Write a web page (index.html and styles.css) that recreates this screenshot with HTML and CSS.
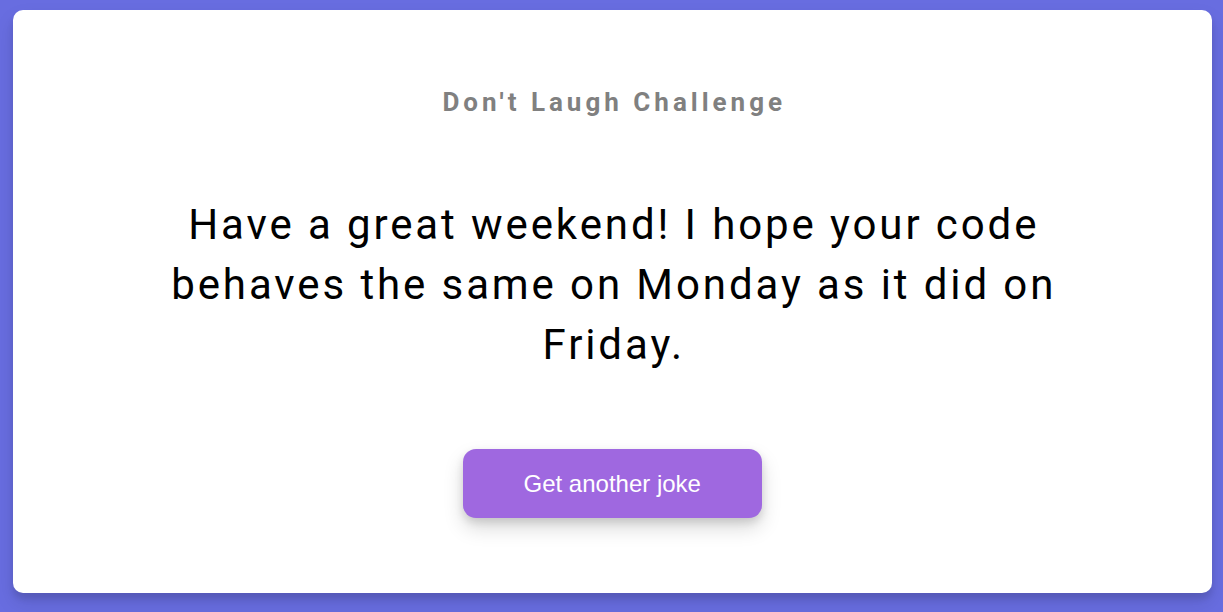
FILE: index.html
```html
<!DOCTYPE html>
<html lang="en">
<head>
<meta charset="utf-8">
<title>Don't Laugh Challenge</title>
<link rel="stylesheet" href="styles.css">
</head>
<body>
  <main class="card">
    <h3 class="title">Don't Laugh Challenge</h3>
    <p class="joke">Have a great weekend! I hope your code behaves the same on Monday as it did on Friday.</p>
    <button class="btn">Get another joke</button>
  </main>
</body>
</html>
```
FILE: styles.css
```css
html, body {
  margin: 0;
  padding: 0;
  height: 100%;
}
body {
  background: #686de0;
  font-family: Roboto, "Liberation Sans", sans-serif;
  display: flex;
  justify-content: center;
  align-items: flex-start;
  overflow: hidden;
}
.card {
  box-sizing: border-box;
  width: 98%;
  height: 583px;
  margin: 10px 0 0 1.5px;
  background: #fff;
  border-radius: 10px;
  box-shadow: 0 10px 20px rgba(0, 0, 0, 0.1), 0 6px 6px rgba(0, 0, 0, 0.1);
  display: flex;
  flex-direction: column;
  align-items: center;
  padding-top: 77px;
  text-align: center;
}
.title {
  margin: 0;
  font-size: 26px;
  line-height: 30px;
  font-weight: 700;
  color: #808080;
  letter-spacing: 4px;
  padding-left: 4px;
}
.joke {
  margin: 78px 0 0;
  max-width: 920px;
  font-size: 42px;
  line-height: 60px;
  letter-spacing: 2.9px;
  padding-left: 3px;
  color: #000;
}
.btn {
  margin-top: 74px;
  border: none;
  background: #9f68e0;
  color: #fff;
  font-family: Arial, "Liberation Sans", sans-serif;
  font-size: 24px;
  line-height: 27px;
  padding: 21px 61px;
  border-radius: 13px;
  box-shadow: 0 10px 20px rgba(0, 0, 0, 0.15), 0 4px 8px rgba(0, 0, 0, 0.12);
  cursor: pointer;
}
```
